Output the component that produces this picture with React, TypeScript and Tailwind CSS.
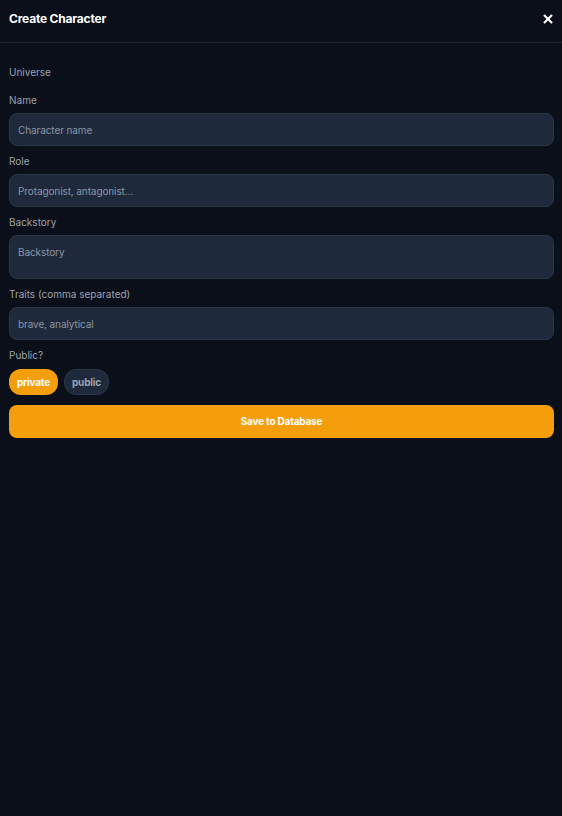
import React, { useState } from 'react';
import { X } from 'lucide-react';

function Field({ label, children }: { label: string; children: React.ReactNode }) {
  return (
    <div className="flex flex-col gap-[7px]">
      <label className="text-[10px] leading-[12px] text-[#9ca3af]">{label}</label>
      {children}
    </div>
  );
}

const inputCls =
  'w-full rounded-lg border border-[#2a3547] bg-[#1e293b] px-[8px] text-[10px] tracking-[-0.1px] text-[#e5e7eb] placeholder:text-[#8b95a5] outline-none';

const pillOn = 'h-[26px] rounded-xl bg-[#f59e0b] px-[8px] text-[10px] font-bold tracking-[-0.2px] text-white';
const pillOff =
  'h-[26px] rounded-xl border border-[#2a3547] bg-[#1e293b] px-[7px] text-[10px] font-bold tracking-[-0.2px] text-[#9ca3af]';

export default function App() {
  const [isPublic, setIsPublic] = useState(false);

  return (
    <div
      className="min-h-[816px] w-full bg-[#0b0f19] text-white"
      style={{ fontFamily: 'Inter, "Noto Sans", sans-serif' }}
    >
      {/* Header */}
      <div className="flex h-[43px] items-center justify-between border-b border-[#1c2233] pb-[4px] pl-[9px] pr-[8px]">
        <h2 className="text-[12px] font-bold tracking-[-0.2px]">Create Character</h2>
        <button className="-mr-[1px] text-white" aria-label="Close">
          <X className="h-[14px] w-[14px]" strokeWidth={3.5} />
        </button>
      </div>

      {/* Form */}
      <div className="flex flex-col gap-[9px] pl-[9px] pr-[8px] pt-[23px]">
        <div className="pb-[7px] text-[10px] leading-[12px] text-[#9ca3af]">Universe</div>
        <Field label="Name">
          <input className={`${inputCls} h-[33px]`} placeholder="Character name" />
        </Field>
        <Field label="Role">
          <input className={`${inputCls} h-[33px]`} placeholder="Protagonist, antagonist..." />
        </Field>
        <Field label="Backstory">
          <textarea className={`${inputCls} h-[44px] resize-none py-[9px]`} placeholder="Backstory" />
        </Field>
        <Field label="Traits (comma separated)">
          <input className={`${inputCls} h-[33px]`} placeholder="brave, analytical" />
        </Field>
        <Field label="Public?">
          <div className="flex gap-[6px] pt-[1px]">
            <button onClick={() => setIsPublic(false)} className={!isPublic ? pillOn : pillOff}>
              private
            </button>
            <button onClick={() => setIsPublic(true)} className={isPublic ? pillOn : pillOff}>
              public
            </button>
          </div>
        </Field>
        <button className="mt-[1px] h-[33px] w-full rounded-lg bg-[#f59e0b] text-[10px] font-bold tracking-[-0.2px] text-white">
          Save to Database
        </button>
      </div>
    </div>
  );
}
